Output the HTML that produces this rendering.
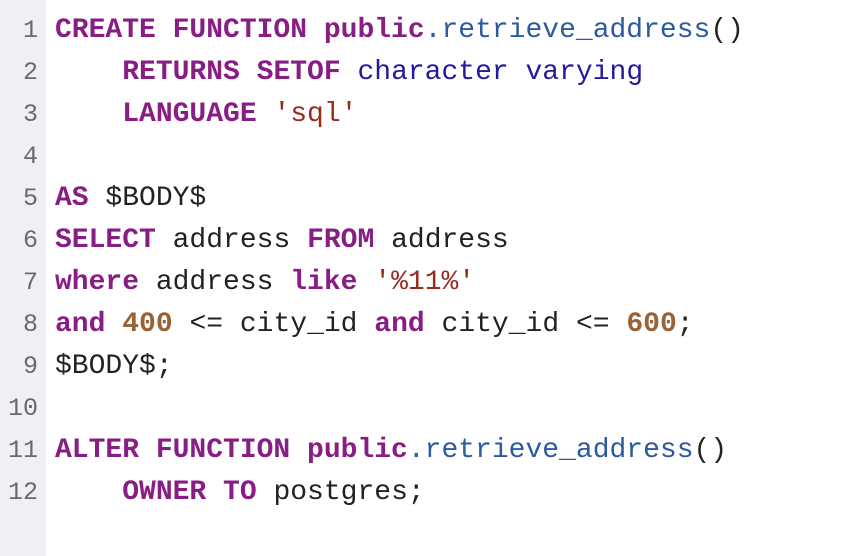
<!DOCTYPE html>
<html><head><style>
html,body{margin:0;padding:0;background:#fff;width:852px;height:556px;overflow:hidden}
.g{position:absolute;left:0;top:0;width:46px;height:556px;background:#eef0f3}
.c{position:absolute;left:0;top:10px;font-family:"Liberation Mono",monospace;font-size:28px;line-height:42px;color:#222}
.l{white-space:pre;height:42px;position:relative}
.n{display:inline-block;width:38px;text-align:right;color:#6a6a6a;margin-right:17px;font-size:25px}
.k{color:#881d84;font-weight:bold}
.f{color:#2c5aa0}
.t{color:#2419a0}
.s{color:#9a2a1c}
.m{color:#9a6235;font-weight:bold}
</style></head><body>
<div class="g"></div>
<div class="c">
<div class="l"><span class="n">1</span><span class="k">CREATE FUNCTION public</span><span class="f">.retrieve_address</span>()</div>
<div class="l"><span class="n">2</span>    <span class="k">RETURNS SETOF</span> <span class="t">character varying</span></div>
<div class="l"><span class="n">3</span>    <span class="k">LANGUAGE</span> <span class="s">'sql'</span></div>
<div class="l"><span class="n">4</span></div>
<div class="l"><span class="n">5</span><span class="k">AS</span> $BODY$</div>
<div class="l"><span class="n">6</span><span class="k">SELECT</span> address <span class="k">FROM</span> address</div>
<div class="l"><span class="n">7</span><span class="k">where</span> address <span class="k">like</span> <span class="s">'%11%'</span></div>
<div class="l"><span class="n">8</span><span class="k">and</span> <span class="m">400</span> &lt;= city_id <span class="k">and</span> city_id &lt;= <span class="m">600</span>;</div>
<div class="l"><span class="n">9</span>$BODY$;</div>
<div class="l"><span class="n">10</span></div>
<div class="l"><span class="n">11</span><span class="k">ALTER FUNCTION public</span><span class="f">.retrieve_address</span>()</div>
<div class="l"><span class="n">12</span>    <span class="k">OWNER TO</span> postgres;</div>
</div>
</body></html>
